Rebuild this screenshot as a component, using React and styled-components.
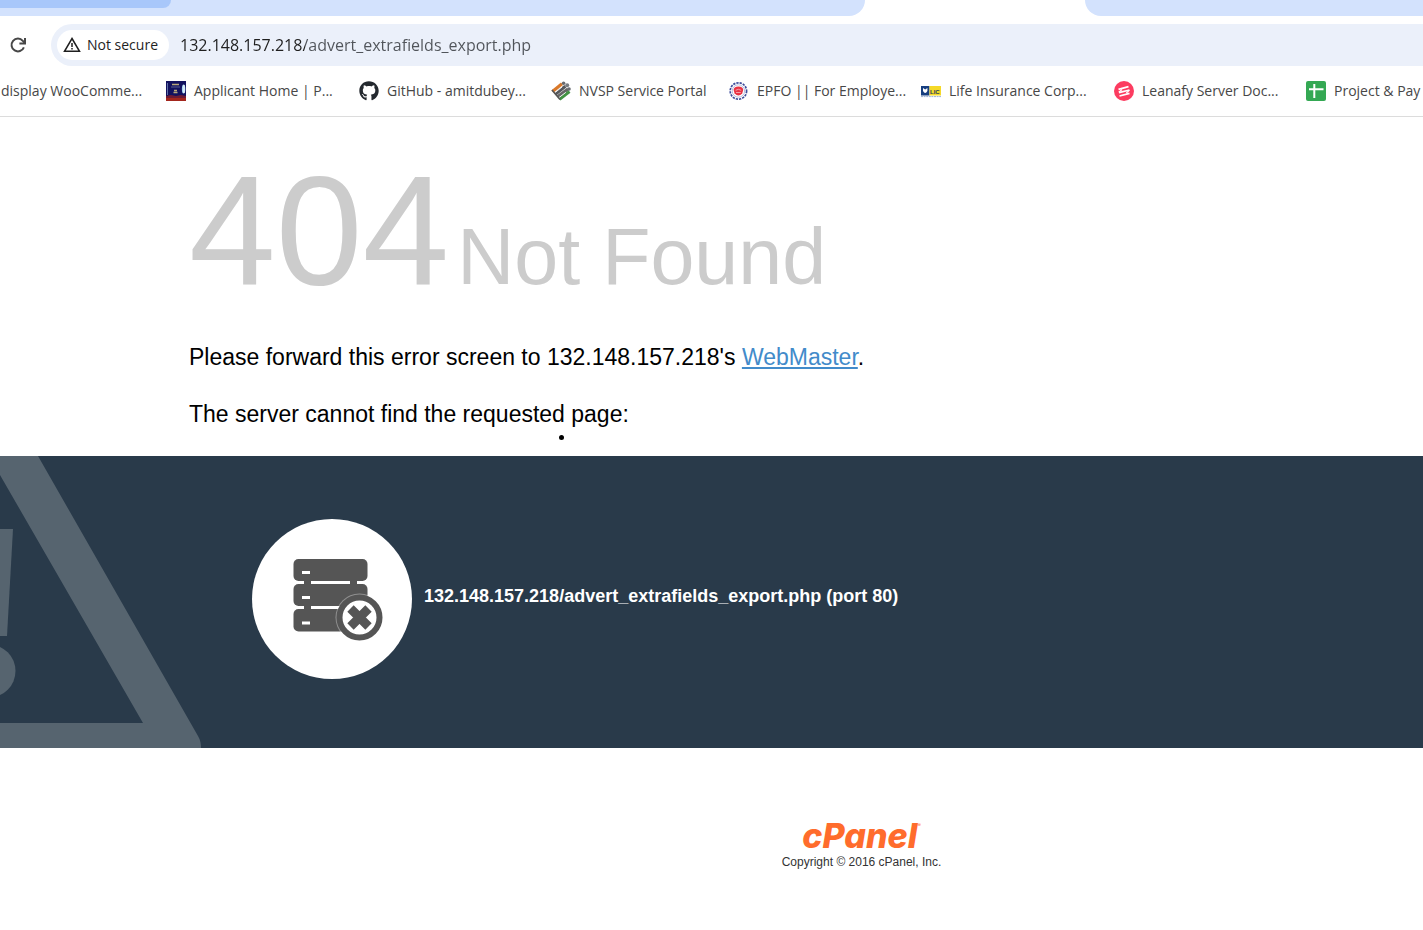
import styled, { createGlobalStyle } from "styled-components";
import { FaGithub } from "react-icons/fa";

const GlobalStyle = createGlobalStyle`
    * {
        box-sizing: border-box;
    }
    body {
        margin: 0;
        background: #fff;
        color: #000;
        font-family: "Liberation Sans", Arial, sans-serif;
        overflow-x: hidden;
    }
`;

const Browser = styled.header`
    border-bottom: 1px solid #dcdcdc;
    font-family: "Open Sans", "Noto Sans", sans-serif;
`;

const TabStrip = styled.div`
    display: flex;
    height: 16px;
    margin-bottom: 8px;
`;

const LeftTabs = styled.div`
    width: 865px;
    background: #d3e2fd;
    border-bottom-right-radius: 16px;
`;

const HoveredTab = styled.div`
    width: 171px;
    height: 8px;
    background: #a8c7fa;
    border-bottom-right-radius: 8px;
`;

const ActiveTab = styled.div`
    width: 220px;
`;

const RightTabs = styled.div`
    flex: 1;
    background: #d3e2fd;
    border-bottom-left-radius: 16px;
`;

const Toolbar = styled.div`
    display: flex;
    align-items: center;
    height: 42px;
    padding-left: 8px;
    gap: 23px;
`;

const ReloadButton = styled.button`
    display: flex;
    padding: 0;
    border: none;
    background: none;
`;

const AddressBar = styled.div`
    flex: 1;
    display: flex;
    align-items: center;
    height: 42px;
    padding-left: 6px;
    gap: 11px;
    background: #ebf0fa;
    border-radius: 21px 0 0 21px;
`;

const SecurityChip = styled.button`
    display: flex;
    align-items: center;
    gap: 6px;
    width: 112px;
    height: 30px;
    padding: 0 0 0 6px;
    border: none;
    border-radius: 15px;
    background: #fff;
    color: #1f1f1f;
    font-family: inherit;
    font-size: 14px;
    white-space: nowrap;
`;

/* host is darker than the path */
const AddressInput = styled.input`
    flex: 1;
    min-width: 0;
    padding: 0;
    border: none;
    outline: none;
    background: linear-gradient(90deg, #1f1f1f 125px, #50545a 125px);
    background-clip: text;
    -webkit-background-clip: text;
    color: transparent;
    font-family: inherit;
    font-size: 16px;
    line-height: 24px;
`;

const Bookmarks = styled.nav`
    display: flex;
    height: 50px;
    padding-left: 1px;
    overflow: hidden;
`;

const Bookmark = styled.a`
    flex: none;
    display: flex;
    align-items: center;
    gap: 8px;
    width: ${({ $width }) => $width || 192}px;
    color: #474747;
    font-size: 14px;
    text-decoration: none;
    white-space: nowrap;

    svg {
        flex: none;
    }
`;

const Label = styled.span`
    padding-bottom: 2px;
`;

const Message = styled.section`
    position: relative;
    padding: 33px 0 0 189px;
    height: 339px;
`;

const Status = styled.h1`
    margin: 0 0 33px;
    color: #ccc;
    font-size: 156px;
    font-weight: normal;
    line-height: 160px;
    white-space: nowrap;
`;

const Reason = styled.span`
    margin-left: 8px;
    font-size: 79px;
    line-height: 80px;
`;

const Info = styled.p`
    margin: 0 0 29px;
    font-size: 23px;
    line-height: 28px;
`;

const MailLink = styled.a`
    color: #428bca;
    text-decoration: underline;
`;

const Pointer = styled.span`
    position: absolute;
    left: 559px;
    top: 318px;
    width: 5px;
    height: 5px;
    border-radius: 50%;
    background: #000;
`;

const Band = styled.section`
    position: relative;
    display: flex;
    align-items: center;
    gap: 12px;
    height: 292px;
    padding: 0 0 6px 252px;
    background: #293a4a;
`;

const Warning = styled.svg`
    position: absolute;
    left: 0;
    top: 0;
`;

const Badge = styled.div`
    display: flex;
    width: 160px;
    height: 160px;
    border-radius: 50%;
    background: #fff;
`;

const Address = styled.strong`
    padding-bottom: 6px;
    color: #fff;
    font-size: 18px;
    line-height: 24px;
`;

const Footer = styled.footer`
    display: flex;
    flex-direction: column;
    align-items: center;
    padding: 72px 0 56px 300px;
`;

const LogoLink = styled.a`
    display: flex;
    color: #ff6c2c;
    font-family: Inter, sans-serif;
    font-size: 34px;
    font-style: italic;
    font-weight: 800;
    line-height: 32px;
    text-decoration: none;
`;

const Registered = styled.span`
    font-size: 5px;
    font-style: normal;
    font-weight: normal;
    line-height: 10px;
`;

const Copyright = styled.div`
    color: #333;
    font-size: 12px;
    line-height: 20px;
`;

function ReloadIcon() {
    return (
        <svg width="20" height="20" viewBox="0 0 20 20" fill="none" stroke="#474747" strokeWidth="2">
            <path d="M15.9 12.4A6.4 6.4 0 1 1 14.8 5.8L16.6 7.8" />
            <path d="M17 3v5.6h-5.6" />
        </svg>
    );
}

function NotSecureIcon() {
    return (
        <svg width="18" height="18" viewBox="0 0 18 18" fill="none" stroke="#1f1f1f" strokeWidth="1.5">
            <path d="M9 2.5L16.5 15.3H1.5Z" strokeLinejoin="miter" />
            <path d="M9 7v4M9 12v1.6" />
        </svg>
    );
}

function ApplicantIcon() {
    return (
        <svg width="20" height="20" viewBox="0 0 20 20">
            <rect width="20" height="20" fill="#12125f" />
            <rect y="15" width="20" height="5" fill="#a3261d" />
            <path d="M0 15l5-1 5 1 5-1 5 1v2H0z" fill="#6e1b34" />
            <path d="M1.5 2v12" stroke="#6070a8" />
            <path d="M6 3.5h7M8 9.5h3M7.5 11.5h4" stroke="#b9a77c" strokeWidth="1.4" />
            <path d="M5 6h9" stroke="#353778" strokeWidth="2" />
            <ellipse cx="17.6" cy="8" rx="1.7" ry="4.6" fill="#a9d7f3" />
            <path d="M18 4v8" stroke="#fff" />
        </svg>
    );
}

function NvspIcon() {
    return (
        <svg width="20" height="20" viewBox="0 0 20 20">
            <g strokeWidth="3.2">
                <path d="M1.5 10.5L11 2.8" stroke="#d97829" />
                <path d="M4.2 13.3L14.4 5.2" stroke="#55585c" />
                <path d="M6.8 15.5L17 8" stroke="#666" />
                <path d="M8.5 18.2L18.5 10.5" stroke="#439343" />
            </g>
            <path d="M4 11.6l7-5.6M7.8 16.7l7-5.3" stroke="#fff" strokeWidth=".9" />
            <path d="M1 9l8 9.5" stroke="#555" strokeWidth="1.6" />
            <circle cx="12.6" cy="2.2" r="1.8" fill="#686b70" />
            <circle cx="16.2" cy="4.2" r="2" fill="#777b80" />
            <circle cx="18" cy="8" r="1.8" fill="#686b70" />
        </svg>
    );
}

function EpfoIcon() {
    return (
        <svg width="20" height="20" viewBox="0 0 20 20">
            <circle cx="9.4" cy="10" r="8.2" fill="#fff" stroke="#3e4e9c" strokeWidth="1.7" strokeDasharray="2.3 1" />
            <circle cx="9.4" cy="10" r="6.2" fill="none" stroke="#b8c0df" strokeWidth="1" />
            <path d="M4.6 9q0-3.600 4.800-3.600t4.800 3.600l-1 3.400q-3.800 4-7.600 0z" fill="#e93445" />
            <path d="M6.6 9.300q2.800-2 5.600 0M7 11.500h4.800" stroke="#f9b6bd" fill="none" strokeWidth=".8" />
        </svg>
    );
}

function LicIcon() {
    return (
        <svg width="20" height="20" viewBox="0 0 20 20">
            <rect y="5" width="8.5" height="9.5" fill="#173f80" />
            <rect x="8.5" y="5" width="11.5" height="9.5" fill="#f5d928" />
            <path d="M2 7v3q2.2 4 4.4 0V7l-2.2 1.6z" fill="#fff" />
            <text x="9" y="12.5" fontFamily="Liberation Sans" fontWeight="bold" fontSize="6" fill="#25385c">
                LIC
            </text>
            <path d="M0 15.6h20" stroke="#9eb2cf" strokeWidth="1" strokeDasharray="2 .6" />
        </svg>
    );
}

function LeanafyIcon() {
    return (
        <svg width="20" height="20" viewBox="0 0 20 20" fill="none">
            <circle cx="10" cy="10" r="10" fill="#fc3c60" />
            <path
                d="M4.500 8.300L14.500 5.600M5 11.700L15.500 9M5.500 15L15.500 12.300"
                stroke="#fff"
                strokeWidth="1.800"
            />
            <path d="M4.800 11.300L8 8.500M12.300 12L15.300 9.300" stroke="#fff" strokeWidth="1.200" />
        </svg>
    );
}

function SheetIcon() {
    return (
        <svg width="20" height="20" viewBox="0 0 20 20">
            <rect width="20" height="20" rx="2" fill="#34a853" />
            <path d="M8.300 3v14M3 8.300h14.500" stroke="#fff" strokeWidth="2" />
        </svg>
    );
}

function ServerIcon() {
    return (
        <svg width="160" height="160" viewBox="0 0 160 160" fill="#555">
            <path d="M52 54h7v30h-7zM98 54h7v30h-7zM52 80h7v20h-7z" />
            <rect x="41.500" y="40" width="74" height="22" rx="5" />
            <rect x="41.500" y="65" width="74" height="22" rx="5" />
            <rect x="41.500" y="90" width="74" height="22.500" rx="5" />
            <path d="M50 53.500h8M50 78.500h8M50 104h8" stroke="#fff" strokeWidth="3" />
            <path d="M100 95h20v25h-20z" fill="#fff" />
            <circle cx="107.500" cy="98.500" r="24" fill="#fff" fillOpacity=".35" />
            <circle cx="107.500" cy="98.500" r="20" fill="#fff" stroke="#555" strokeWidth="6" />
            <path d="M98.500 89.500l18 18M116.500 89.500l-18 18" stroke="#555" strokeWidth="9" />
        </svg>
    );
}

const bookmarks = [
    { label: "display WooComme...", width: 165 },
    { label: "Applicant Home | P...", icon: <ApplicantIcon />, width: 193 },
    { label: "GitHub - amitdubey...", icon: <FaGithub size={20} color="#24292f" /> },
    { label: "NVSP Service Portal", icon: <NvspIcon />, width: 178 },
    { label: "EPFO || For Employe...", icon: <EpfoIcon /> },
    { label: "Life Insurance Corp...", icon: <LicIcon />, width: 193 },
    { label: "Leanafy Server Doc...", icon: <LeanafyIcon /> },
    { label: "Project & Pay", icon: <SheetIcon /> },
];

function App() {
    return (
        <>
            <GlobalStyle />
            <Browser>
                <TabStrip>
                    <LeftTabs>
                        <HoveredTab />
                    </LeftTabs>
                    <ActiveTab />
                    <RightTabs />
                </TabStrip>
                <Toolbar>
                    <ReloadButton aria-label="Reload">
                        <ReloadIcon />
                    </ReloadButton>
                    <AddressBar>
                        <SecurityChip>
                            <NotSecureIcon />
                            <Label>Not secure</Label>
                        </SecurityChip>
                        <AddressInput
                            type="text"
                            aria-label="Address"
                            defaultValue="132.148.157.218/advert_extrafields_export.php"
                        />
                    </AddressBar>
                </Toolbar>
                <Bookmarks>
                    {bookmarks.map(({ label, icon, width }) => (
                        <Bookmark href="#" key={label} $width={width}>
                            {icon}
                            <Label>{label}</Label>
                        </Bookmark>
                    ))}
                </Bookmarks>
            </Browser>
            <main>
                <Message>
                    <Status>
                        404
                        <Reason>Not Found</Reason>
                    </Status>
                    <Info>
                        Please forward this error screen to 132.148.157.218's <MailLink href="#">WebMaster</MailLink>.
                    </Info>
                    <Info>The server cannot find the requested page:</Info>
                    <Pointer />
                </Message>
                <Band>
                    <Warning width="202" height="292" viewBox="0 0 202 292" fill="#56646f">
                        <path d="M0 0H38L198 280Q201 285 201 292H0V267H143L0 19Z" />
                        <path d="M0 73H13L7 180H0Z" />
                        <circle cx="-11" cy="215" r="26.500" />
                    </Warning>
                    <Badge>
                        <ServerIcon />
                    </Badge>
                    <Address>132.148.157.218/advert_extrafields_export.php (port 80)</Address>
                </Band>
            </main>
            <Footer>
                <LogoLink href="#">
                    cPanel
                    <Registered>®</Registered>
                </LogoLink>
                <Copyright>Copyright © 2016 cPanel, Inc.</Copyright>
            </Footer>
        </>
    );
}

export default App;
